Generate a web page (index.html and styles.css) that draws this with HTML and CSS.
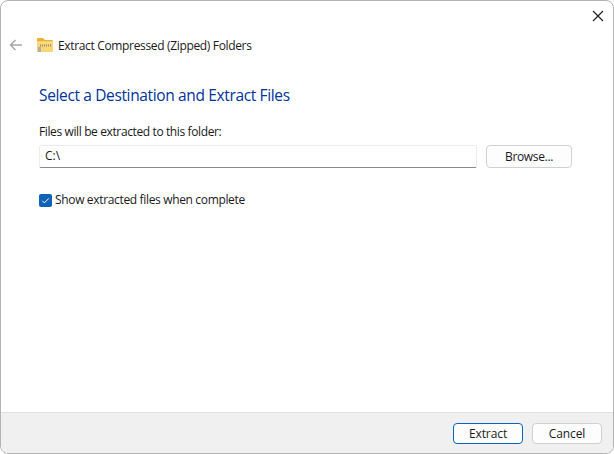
FILE: index.html
```html
<!DOCTYPE html>
<html lang="en">
<head>
<meta charset="utf-8">
<title>Extract Compressed (Zipped) Folders</title>
<link rel="stylesheet" href="styles.css">
</head>
<body>
<div class="window">
  <div class="titlebar">
    <svg class="close" width="12" height="12" viewBox="0 0 12 12"><path d="M1 1L11 11M11 1L1 11" stroke="#1a1a1a" stroke-width="1.1" fill="none"/></svg>
  </div>
  <div class="nav">
    <svg class="back" width="14" height="12" viewBox="0 0 14 12"><path d="M13 6H1.5M6.5 1L1.5 6L6.5 11" stroke="#a6a6a6" stroke-width="1.4" fill="none"/></svg>
    <svg class="folder" width="16" height="16" viewBox="0 0 16 16">
      <path d="M0 2Q0 1 1 1H6L8 3H15Q16 3 16 4V7H0Z" fill="#efb02e"/>
      <path d="M0 5H16V14Q16 15 15 15H1Q0 15 0 14Z" fill="#fcd672"/>
      <path d="M0 5H16" stroke="#fde9b0" stroke-width="1" fill="none"/>
      <path d="M3 8.5H15" stroke="#8f8d80" stroke-width="2" stroke-dasharray="1 1" fill="none"/>
      <path d="M1 10H4V15H1Z" fill="#b0b0a8"/>
    </svg>
    <span class="app-title">Extract Compressed (Zipped) Folders</span>
  </div>
  <main class="content">
    <h1 class="heading">Select a Destination and Extract Files</h1>
    <label class="field-label">Files will be extracted to this folder:</label>
    <div class="path-row">
      <div class="path-input">C:\</div>
      <div class="btn browse">Browse...</div>
    </div>
    <div class="check-row">
      <span class="checkbox"><svg width="13" height="13" viewBox="0 0 13 13"><path d="M3.3 6.8L5.4 8.9L9.8 4.4" stroke="#fff" stroke-width="1" fill="none"/></svg></span>
      <span class="check-label">Show extracted files when complete</span>
    </div>
  </main>
  <footer class="footer">
    <div class="btn action primary">Extract</div>
    <div class="btn action">Cancel</div>
  </footer>
</div>
</body>
</html>
```
FILE: styles.css
```css
* { box-sizing: border-box; }
html, body { margin: 0; padding: 0; background: #fff; }
body { font-family: "Open Sans", "Noto Sans", sans-serif; font-size: 12px; color: #111; }
.window {
  width: 614px; height: 454px;
  display: flex; flex-direction: column;
  background: #fff;
  border: 1px solid #b4b4b4;
  border-radius: 8px;
  overflow: hidden;
}
.titlebar { height: 29px; display: flex; justify-content: flex-end; align-items: center; padding: 0 9px 0 0; }
.nav { height: 30px; display: flex; align-items: center; padding-left: 8px; }
.back { margin-right: 14px; }
.folder { margin-right: 5px; }
.app-title { font-size: 12px; letter-spacing: -0.34px; color: #1a1a1a; }
.content { flex: 1; padding: 24px 0 0 38px; }
.heading { margin: 0; font-size: 15.5px; font-weight: 400; line-height: 22px; color: #003399; letter-spacing: -0.36px; }
.field-label { display: block; margin-top: 18px; line-height: 16px; letter-spacing: -0.38px; color: #1a1a1a; }
.path-row { display: flex; align-items: center; margin-top: 5px; }
.path-input {
  width: 438px; height: 23px; padding: 1px 0 0 5px; line-height: 17px;
  background: #fff; border: 1px solid #ececec; border-bottom: 1px solid #8a8a8a; border-radius: 2px;
  color: #1a1a1a;
}
.btn {
  display: flex; align-items: center; justify-content: center;
  background: #fdfdfd; border: 1px solid #d0d0d0; border-radius: 4px;
  color: #1a1a1a; letter-spacing: -0.34px;
}
.browse { width: 86px; height: 23px; margin-left: 9px; padding-bottom: 1px; }
.check-row { display: flex; align-items: center; margin-top: 24px; }
.checkbox { width: 13px; height: 13px; border-radius: 2px; background: #0f62b5; display: flex; margin-right: 3px; }
.check-label { line-height: 16px; letter-spacing: -0.34px; color: #1a1a1a; }
.footer {
  height: 41px; display: flex; justify-content: flex-end; align-items: center; gap: 9px;
  padding: 0 11px 0 0; background: #f0f0f0; border-top: 1px solid #e2e2e2;
}
.action { width: 70px; height: 21px; letter-spacing: -0.1px; }
.primary { border: 1px solid #0067c0; }
```
